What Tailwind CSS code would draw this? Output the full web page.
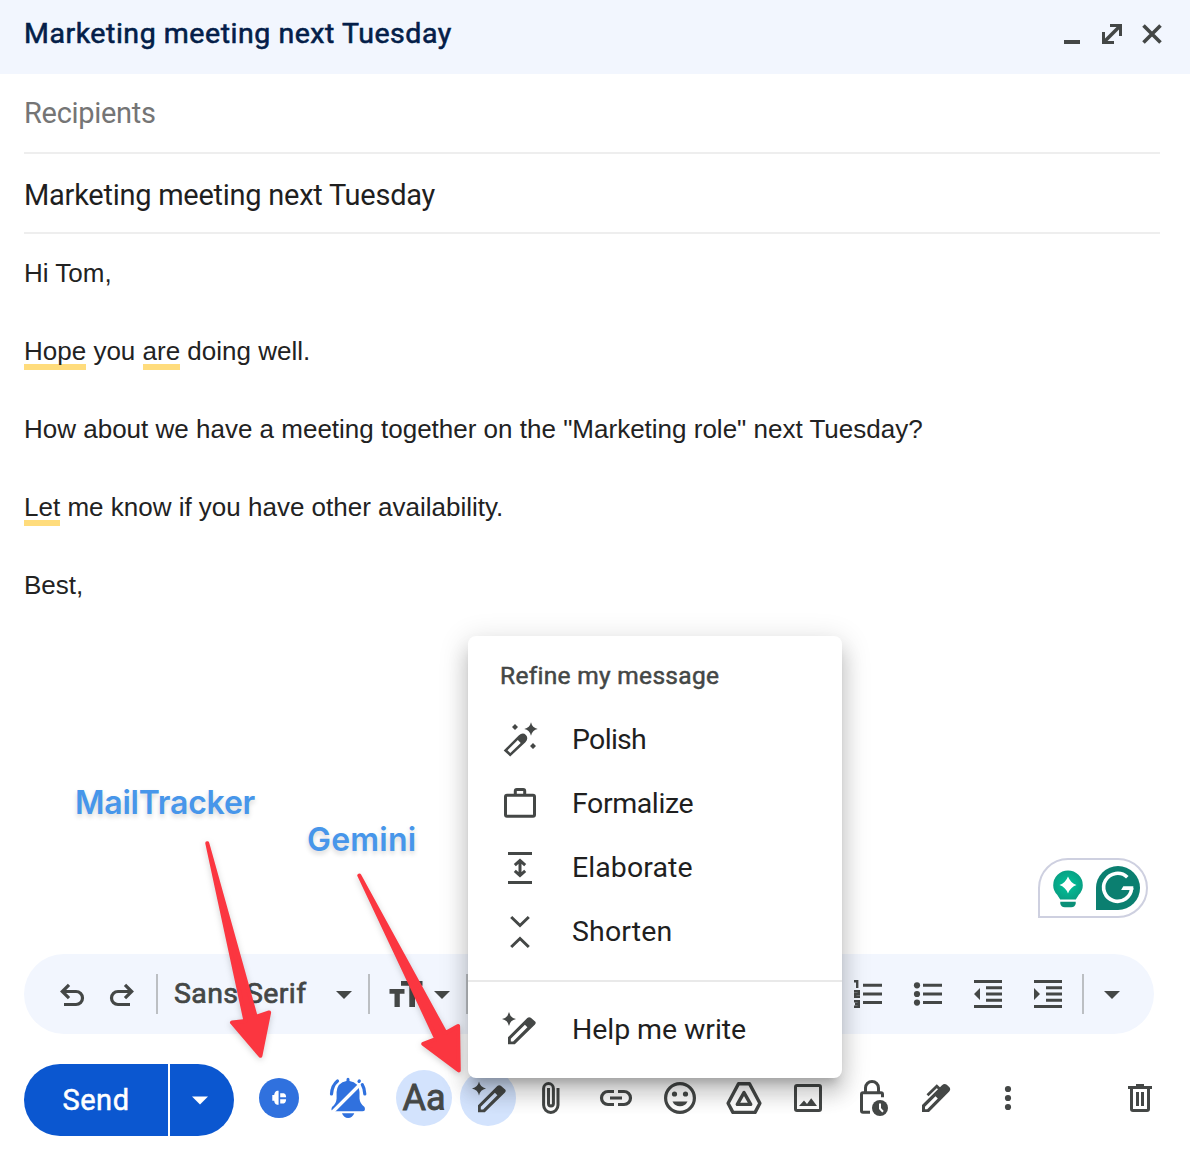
<!DOCTYPE html>
<html lang="en">
<head>
<meta charset="utf-8">
<title>Compose</title>
<script src="https://cdn.jsdelivr.net/npm/@tailwindcss/browser@4"></script>
</head>
<body class="bg-white">
<div class="relative flex h-[1162px] w-[1190px] flex-col overflow-hidden bg-white font-['Roboto',sans-serif] text-[#1f1f1f]">

  <header class="flex h-[74px] shrink-0 items-center justify-between bg-[#f2f6fe] pl-6 pr-[18px]">
    <h1 class="pb-[7px] text-[28.5px] leading-9 tracking-[0.54px] whitespace-nowrap text-[#041e49] [-webkit-text-stroke:0.6px_#041e49]">Marketing meeting next Tuesday</h1>
    <div class="flex pb-[6px] text-[#444746]">
      <svg class="size-10" viewBox="1052 14 40 40"><path fill="currentColor" d="M1064 40h16v4h-16z"/></svg>
      <svg class="size-10" viewBox="1092 14 40 40" fill="none" stroke="currentColor" stroke-width="3"><path d="M1110 25.5h10.5V36M1103.5 32v10.5H1114"/><path stroke-width="3.6" d="M1104 42l16-16"/></svg>
      <svg class="size-10" viewBox="1132 14 40 40" fill="none" stroke="currentColor" stroke-width="3.6"><path d="M1143.5 25.5l17 17m0-17l-17 17"/></svg>
    </div>
  </header>

  <div class="ml-6 mr-[30px] flex h-20 shrink-0 items-center border-b-2 border-[#eeeeee] text-[29px] leading-9 text-[#757575]"><span class="tracking-[-0.3px] whitespace-nowrap">Recipients</span></div>
  <div class="ml-6 mr-[30px] flex h-20 shrink-0 items-center border-b-2 border-[#eeeeee] pt-1 text-[29px] leading-9"><span class="tracking-[-0.26px] whitespace-nowrap">Marketing meeting next Tuesday</span></div>

  <main class="flex flex-1 flex-col gap-[39px] px-6 pt-5 font-['Liberation_Sans',Arial,sans-serif] text-[26px] leading-[39px] whitespace-nowrap text-[#222222]">
    <p>Hi Tom,</p>
    <p><span class="inline-block h-[38px] border-b-6 border-[#ffdc7c]">Hope</span> you <span class="inline-block h-[38px] border-b-6 border-[#ffdc7c]">are</span> doing well.</p>
    <p>How about we have a meeting together on the "Marketing role" next Tuesday?</p>
    <p><span class="inline-block h-[38px] border-b-6 border-[#ffdc7c]">Let</span> me know if you have other availability.</p>
    <p>Best,</p>
  </main>

  <div class="ml-6 mr-9 flex h-20 shrink-0 items-center rounded-full bg-[#f2f6fe] pl-7 pr-[30px] text-[#444746]">
    <svg class="mr-[10px] size-10 shrink-0" viewBox="52 974 40 40" fill="none" stroke="currentColor" stroke-width="3.2"><path d="M62.500 991.500H76a6.500 6.500 0 0 1 0 13H64M69 984.800l-6.700 6.700 6.700 6.700"/></svg>
    <svg class="size-10 shrink-0" viewBox="102 974 40 40" fill="none" stroke="currentColor" stroke-width="3.2"><path d="M131.500 991.500H118a6.500 6.500 0 0 0 0 13H130M125 984.800l6.700 6.700-6.700 6.700"/></svg>
    <div class="ml-[14px] h-10 w-0.5 bg-[#bcbfc3]"></div>
    <span class="ml-4 w-[158px] text-[28.5px] leading-9 tracking-[0.4px] whitespace-nowrap [-webkit-text-stroke:0.7px_#444746]">Sans Serif</span>
    <svg class="size-6 shrink-0" viewBox="332 982 24 24"><path fill="currentColor" d="M336 991h16l-8 8z"/></svg>
    <div class="ml-3 h-10 w-0.5 bg-[#bcbfc3]"></div>
    <svg class="ml-4 size-10 shrink-0" viewBox="386 974 40 40" fill="currentColor"><path d="M389.500 989h15v4.700h-4.700V1007h-5.300v-13.300h-5zM401 981h21.500v4.700H415V1007h-5.700v-21.300H401z"/></svg>
    <svg class="ml-1 size-6 shrink-0" viewBox="430 982 24 24"><path fill="currentColor" d="M434 991h16l-8 8z"/></svg>
    <div class="ml-3 h-10 w-0.5 bg-[#bcbfc3]"></div>
    <div class="ml-auto flex items-center gap-5">
      <svg class="size-10" viewBox="848 974 40 40" fill="none" stroke="currentColor" stroke-width="2.4"><path d="M854 981.300h3.200v6.700M854 991.200h4.800v2.800h-3.600v2.800h4.800M854 1001.200h4.800v5.600h-4.800M855 1004h3.500"/><path fill="currentColor" stroke="none" d="M863 983.700h19v3.100h-19zM863 992.500h19v3.100h-19zM863 1001h19v3.100h-19z"/></svg>
      <svg class="size-10" viewBox="908 974 40 40" fill="currentColor"><circle cx="917" cy="985.300" r="3.1"/><circle cx="917" cy="994" r="3.1"/><circle cx="917" cy="1002.600" r="3.1"/><path d="M923 983.700h19v3.100h-19zM923 992.500h19v3.100h-19zM923 1001h19v3.100h-19z"/></svg>
      <svg class="size-10" viewBox="968 974 40 40" fill="currentColor"><path d="M974 980h28v3h-28zM974 1005h28v3h-28zM986 986.300h16v3h-16zM986 992.500h16v3h-16zM986 998.700h16v3h-16zM980 988v12l-6-6z"/></svg>
      <svg class="size-10" viewBox="1028 974 40 40" fill="currentColor"><path d="M1034 980h28v3h-28zM1034 1005h28v3h-28zM1046 986.300h16v3h-16zM1046 992.500h16v3h-16zM1046 998.700h16v3h-16zM1034 988v12l6-6z"/></svg>
    </div>
    <div class="ml-[14px] h-10 w-0.5 bg-[#bcbfc3]"></div>
    <svg class="ml-4 size-6 shrink-0" viewBox="1100 982 24 24"><path fill="currentColor" d="M1104 991h16l-8 8z"/></svg>
  </div>

  <footer class="mb-[26px] ml-6 mt-[30px] flex h-[72px] shrink-0 text-[#444746]">
    <div class="flex gap-0.5 text-white">
      <button class="flex w-36 items-center justify-center rounded-l-full bg-[#0b57d0] pb-px text-[29px] leading-9 tracking-[0.5px] [-webkit-text-stroke:0.5px_#ffffff]">Send</button>
      <button class="flex w-16 items-center rounded-r-full bg-[#0b57d0] pl-[18px]"><svg class="size-6" viewBox="188 1088 24 24"><path fill="currentColor" d="M192 1096.500h16l-8 8z"/></svg></button>
    </div>
    <div class="flex h-[68px] items-center">
      <svg class="ml-[25px] size-10 shrink-0" viewBox="259 1078 40 40"><circle cx="279" cy="1098" r="20" fill="#3071de"/><path fill="#fff" d="M278.600 1090.700v14h-1.500q-2.600-.6-2.900-4h-1.900v-5.600h1.900q.3-3.800 2.900-4.400zM280.200 1093.300h3.500q2.400.6 2.400 3.900h-5.900zM280.200 1099.200h5.900q0 3.500-2.400 4.200h-3.500z"/></svg>
      <svg class="ml-[29px] size-11 shrink-0" viewBox="328 1076 44 44"><path fill="#3071de" d="M346.500 1081v-1.500q0-1.700 1.500-1.700t1.500 1.700v1.500q9.600 1.600 10 11v6.500q.4 5.200 5 8.500 1.500 4.200-2 4.300h-29q-3.200-.4-1.500-4.300 4.300-3 4.600-8.500v-6.500q.7-9.400 9.900-11zM342 1113.200h12.300q-1.900 4.800-6.200 4.800t-6.100-4.800z"/><path stroke="#fff" stroke-width="3.200" d="M331 1113.500l30.500-30.500"/><g fill="none" stroke="#3071de" stroke-width="3.200" stroke-linecap="round"><path d="M337.500 1081q-5.500 4.500-6 13M359 1081.300l.3-.3M362.300 1084.600q2.200 3.500 2.500 9.400"/></g></svg>
      <div class="ml-[24px] flex size-14 shrink-0 items-center justify-center rounded-full bg-[#d3e3fd] text-[36px] leading-none [-webkit-text-stroke:0.9px_#444746]">Aa</div>
      <div class="ml-2 flex size-14 shrink-0 items-center justify-center rounded-full bg-[#d3e3fd]">
        <svg class="size-10" viewBox="498 1010 40 40" fill="currentColor"><path d="M509 1013.500q1.200 5.800 7 7-5.800 1.200-7 7-1.200-5.800-7-7 5.800-1.200 7-7z"/><path fill-rule="evenodd" d="M508 1044.300v-7l19.300-19.300q1.800-1.300 3.500-.2l4.600 4q1 1.300-.4 2.700l-20.200 19.800zM510.800 1041.500h2.300l14.300-14.300-2.500-2.500-14.100 14.100z"/></svg>
      </div>
      <svg class="ml-[14px] size-10 shrink-0" viewBox="530 1078 40 40" fill="none" stroke="currentColor" stroke-width="3"><path d="M558 1088v17a7.200 7.400 0 0 1-14.400 0v-16.500a4.900 4.900 0 0 1 9.800 0v15a2.450 2.450 0 0 1-4.900 0V1088"/></svg>
      <svg class="ml-[26px] size-10 shrink-0" viewBox="596 1078 40 40" fill="none" stroke="currentColor" stroke-width="3.2"><path d="M614 1091.500h-6a6.500 6.500 0 0 0 0 13h6M618 1091.500h6a6.500 6.500 0 0 1 0 13h-6M610 1098h12"/></svg>
      <svg class="ml-6 size-10 shrink-0" viewBox="660 1078 40 40" fill="currentColor"><circle cx="680" cy="1098" r="14.400" fill="none" stroke="currentColor" stroke-width="3.2"/><circle cx="674.500" cy="1094" r="2.600"/><circle cx="685.500" cy="1094" r="2.600"/><path d="M672.500 1101.500h15q-2.200 4.800-7.500 4.800t-7.500-4.800z"/></svg>
      <svg class="ml-6 size-10 shrink-0" viewBox="724 1078 40 40" fill="none" stroke="currentColor" stroke-width="3.4" stroke-linejoin="round"><path d="M738.500 1083.700h11l10.400 19.600-4.800 9.100h-22.200l-4.800-9.100z"/><path d="M744 1092.600l-6.700 11.800h13.400z"/></svg>
      <svg class="ml-6 size-10 shrink-0" viewBox="788 1078 40 40"><rect x="795.500" y="1085.500" width="25" height="25" rx="1.500" fill="none" stroke="currentColor" stroke-width="3"/><path fill="currentColor" d="M799 1106l5-5.500 3 3.500 4.200-5.800 5.800 7.800z"/></svg>
      <svg class="ml-[26px] size-10 shrink-0" viewBox="854 1078 40 40" fill="none" stroke="currentColor" stroke-width="3"><path d="M865.500 1092v-4a6.500 6.500 0 0 1 13 0v4M870 1112.300h-7q-1.500 0-1.500-1.500v-16.500q0-1.500 1.500-1.500h18q1.500 0 1.500 1.500v3"/><circle cx="880" cy="1108" r="8" fill="currentColor" stroke="none"/><path stroke="#fff" stroke-width="2" d="M880 1103.500v5l3 3.200"/></svg>
      <svg class="ml-[22px] size-10 shrink-0" viewBox="916 1078 40 40"><path fill="currentColor" fill-rule="evenodd" d="M922 1112v-7l20-19.800q2.500-2.200 4.800-.4l2.400 2.300q2 2.200 0 4.500L929 1112zM925 1109.200h2.200l10.600-10.700-2.300-2.300-10.500 10.600z"/><path fill="none" stroke="currentColor" stroke-width="2.8" d="M927.500 1095.300l9.300-9 4.500 4.200"/></svg>
      <svg class="ml-8 size-10 shrink-0" viewBox="988 1078 40 40" fill="currentColor"><circle cx="1008" cy="1089" r="3.1"/><circle cx="1008" cy="1098" r="3.1"/><circle cx="1008" cy="1107" r="3.1"/></svg>
      <svg class="ml-[92px] size-10 shrink-0" viewBox="1120 1078 40 40"><path fill="currentColor" d="M1128 1086h8v-2h8v2h8v3h-24zM1136 1092h3v14h-3zM1141 1092h3v14h-3z"/><path fill="none" stroke="currentColor" stroke-width="3" d="M1131.500 1088v21q0 1.500 1.500 1.500h14q1.500 0 1.500-1.500v-21"/></svg>
    </div>
  </footer>

  <div class="absolute left-[468px] top-[636px] flex h-[442px] w-[374px] flex-col rounded-lg bg-white pt-5 shadow-[0_10px_10px_-6px_rgba(0,0,0,0.2),0_16px_20px_2px_rgba(0,0,0,0.14),0_6px_28px_4px_rgba(0,0,0,0.12)]">
    <div class="h-[52px] pl-8 text-[24.5px] leading-10 tracking-[0.3px] whitespace-nowrap text-[#444746] [-webkit-text-stroke:0.5px_#444746]">Refine my message</div>
    <div class="flex h-16 items-center gap-8 pl-8 text-[28.5px] leading-9">
      <svg class="size-10 text-[#444746]" viewBox="500 720 40 40" fill="currentColor"><path d="M531 722.300q1.200 5.500 6.700 6.700-5.500 1.200-6.700 6.700-1.200-5.500-6.700-6.700 5.500-1.200 6.700-6.700zM515 724l3 3-3 3-3-3zM533 743l3 3-3 3-3-3z"/><path fill-rule="evenodd" d="M503.700 750.500l15-15q4-3.600 7.200-.5 3 3.400-.5 7.200l-15.200 14.300zM507.500 750.300l2.800 2.800 10.400-10.200-2.900-2.900z"/></svg><span class="tracking-[-0.7px]">Polish</span></div>
    <div class="flex h-16 items-center gap-8 pl-8 text-[28.5px] leading-9">
      <svg class="size-10 text-[#444746]" viewBox="500 784 40 40" fill="none" stroke="currentColor" stroke-width="3"><rect x="505.500" y="795.300" width="29" height="21" rx="1.500"/><path d="M515.300 795v-4q0-1.500 1.500-1.500h6.400q1.500 0 1.500 1.500v4"/></svg><span class="tracking-[-0.4px]">Formalize</span></div>
    <div class="flex h-16 items-center gap-8 pl-8 text-[28.5px] leading-9">
      <svg class="size-10 text-[#444746]" viewBox="500 848 40 40" fill="none" stroke="currentColor" stroke-width="3"><path d="M508 853.500h24M508 882.500h24M520 860.500v15M514.800 865.200l5.200-4.600 5.200 4.600M514.800 870.800l5.200 4.600 5.200-4.600"/></svg><span class="tracking-[0.08px]">Elaborate</span></div>
    <div class="flex h-16 items-center gap-8 pl-8 text-[28.5px] leading-9">
      <svg class="size-10 text-[#444746]" viewBox="500 912 40 40" fill="none" stroke="currentColor" stroke-width="3"><path d="M511.200 917l8.800 8.500 8.800-8.500M511.200 947l8.800-8.500 8.800 8.500"/></svg><span class="tracking-[0.15px]">Shorten</span></div>
    <div class="mt-4 h-0.5 bg-[#e9e9e9]"></div>
    <div class="mt-4 flex h-16 items-center gap-8 pl-8 text-[28.5px] leading-9">
      <svg class="size-10 text-[#444746]" viewBox="500 1010 40 40" fill="currentColor"><path d="M509 1012q1.200 5.800 7 7-5.800 1.200-7 7-1.200-5.800-7-7 5.800-1.200 7-7z"/><path fill-rule="evenodd" d="M508 1044.300v-7l19.300-19.300q1.800-1.300 3.500-.2l4.600 4q1 1.300-.4 2.700l-20.200 19.800zM510.800 1041.500h2.300l14.300-14.300-2.500-2.500-14.100 14.100z"/></svg><span class="tracking-[-0.08px]">Help me write</span></div>
  </div>

  <div class="absolute left-[1038px] top-[858px] flex h-[60px] w-[110px] items-center rounded-[30px] rounded-bl-none border-2 border-[#ced0e0] bg-white">
    <svg class="h-14 w-[106px]" viewBox="1040 860 106 56">
      <defs><radialGradient id="bulb"><stop offset="0" stop-color="#00c49a"/><stop offset="1" stop-color="#08a184"/></radialGradient></defs>
      <path fill="url(#bulb)" d="M1068 870.500a14.800 14.800 0 0 1 14.800 14.800q0 5.500-4 9.500l-3 4.700h-15.600l-3-4.700q-4-4-4-9.500a14.800 14.800 0 0 1 14.800-14.800z"/>
      <path fill="#0a9078" d="M1060.300 901.800h15.400v1.700q-.5 3.700-4.500 3.700h-6.400q-4 0-4.500-3.700z"/>
      <path fill="#fff" d="M1068 876.500q2.500 6.500 8.500 8.500-6 2-8.500 8.500-2.500-6.500-8.500-8.500 6-2 8.500-8.500z"/>
      <path fill="#0b7f70" d="M1118 866a22 22 0 0 1 0 44h-22v-22a22 22 0 0 1 22-22z"/>
      <path fill="none" stroke="#fff" stroke-width="3.600" d="M1127.300 877.200a14 14 0 1 0 4.300 10.800"/><path fill="#fff" d="M1123.300 886.200h10v3.800h-12.200z"/>
    </svg>
  </div>

  <div class="absolute left-[75px] top-[783px] font-['Inter',sans-serif] text-[32px] font-semibold leading-10 tracking-[-0.22px] whitespace-nowrap text-[#4796ea] [text-shadow:0_3px_5px_rgba(0,0,0,0.16)]">MailTracker</div>
  <div class="absolute left-[307px] top-[820px] font-['Inter',sans-serif] text-[32px] font-semibold leading-10 tracking-[0.2px] whitespace-nowrap text-[#4796ea] [text-shadow:0_3px_5px_rgba(0,0,0,0.16)]">Gemini</div>
  <svg class="absolute left-[190px] top-[830px] h-[260px] w-[290px] drop-shadow-[0_2px_3px_rgba(0,0,0,0.18)]" viewBox="190 830 290 260" fill="#fb3640" stroke="#fb3640" stroke-width="4" stroke-linejoin="round">
    <path d="M207.300 843.300L255.800 1017l13.300-4.500-8.700 43.300-28.400-33.300 13.500-1.500z"/>
    <path d="M359.300 875.500L445.500 1033l12.600-7 .7 44.500-35.500-26.700 13-5z"/>
  </svg>
</div>
</body>
</html>
